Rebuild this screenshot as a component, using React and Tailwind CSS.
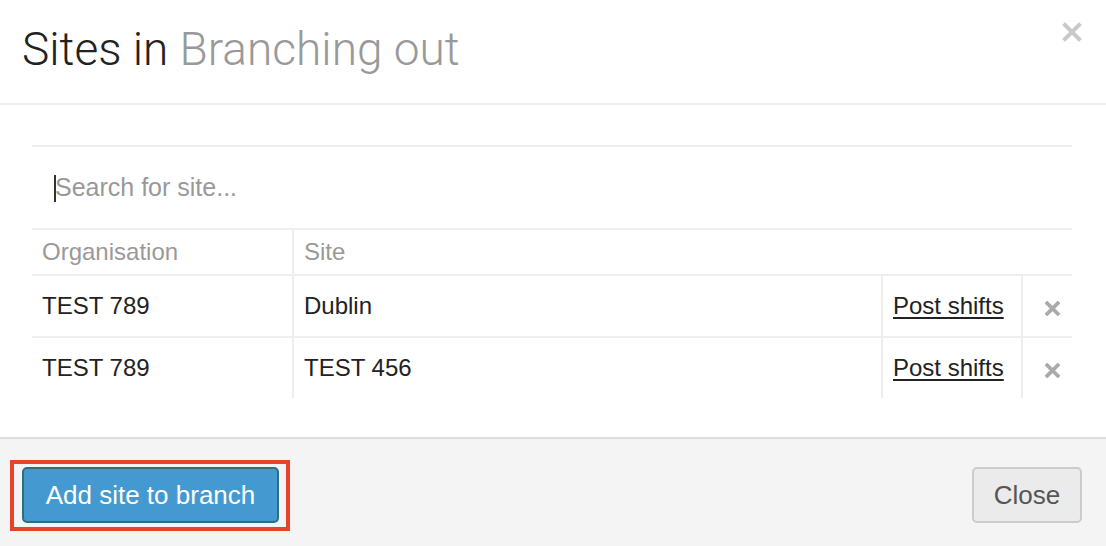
import React from "react";

const rows = [
  { org: "TEST 789", site: "Dublin" },
  { org: "TEST 789", site: "TEST 456" },
];

function Cross({ size, stroke, color }) {
  return (
    <svg width={size} height={size} viewBox="0 0 20 20">
      <path d="M3 3 L17 17 M17 3 L3 17" stroke={color} strokeWidth={stroke} strokeLinecap="square" />
    </svg>
  );
}

export default function App() {
  return (
    <div className="w-[1106px] h-[546px] bg-white flex flex-col overflow-hidden" style={{ fontFamily: '"Liberation Sans", Arial, sans-serif' }}>
      <div className="h-[105px] shrink-0 border-b-2 border-[#eeeeee] flex items-start justify-between pl-[22px] pr-[24px]">
        <h1 className="mt-[21px] text-[46px] leading-[56px] font-light text-[#222]" style={{ fontFamily: "Roboto, sans-serif" }}>
          Sites in <span className="text-[#999]">Branching out</span>
        </h1>
        <button className="mt-[22px]">
          <Cross size={20} stroke={4} color="#c9c9c9" />
        </button>
      </div>

      <div className="pl-[32px] pr-[34px] pt-[40px] pb-[39px]">
        <div className="relative border-t-2 border-[#eeeeee] h-[83px] flex items-center pl-[23px]">
          <span className="absolute left-[22px] top-[28px] w-[2px] h-[27px] bg-[#333]"></span>
          <input
            className="w-full outline-none text-[25px] text-[#222] placeholder:text-[#999] bg-transparent"
            placeholder="Search for site..."
          />
        </div>

        <div className="grid grid-cols-[260px_1fr] border-t-2 border-[#eeeeee] h-[46px] text-[24px] text-[#999]">
          <div className="pl-[10px] flex items-center">Organisation</div>
          <div className="pl-[10px] flex items-center border-l-2 border-[#eeeeee]">Site</div>
        </div>

        {rows.map((r, i) => (
          <div key={i} className="grid grid-cols-[260px_589px_140px_51px] border-t-2 border-[#eeeeee] h-[62px] text-[24px] text-[#222]">
            <div className="pl-[10px] flex items-center">{r.org}</div>
            <div className="pl-[10px] flex items-center border-l-2 border-[#eeeeee]">{r.site}</div>
            <div className="pl-[10px] flex items-center border-l-2 border-[#eeeeee]">
              <a href="#" className="underline underline-offset-[3px] decoration-2">Post shifts</a>
            </div>
            <div className="flex items-center pl-[22px] border-l-2 border-[#eeeeee] pt-[4px]">
              <Cross size={15} stroke={5} color="#aaaaaa" />
            </div>
          </div>
        ))}
      </div>

      <div className="flex-1 border-t-2 border-[#dddddd] bg-[#f4f4f4] flex items-start justify-between pl-[10px] pr-[24px] pt-[21px]">
        <div className="border-4 border-[#e8412c] pl-[8px] pr-[7px] pt-[3px] pb-[4px]">
          <button className="h-[56px] w-[257px] rounded-[5px] bg-[#4599d1] border-2 border-[#2f6f7d] text-white text-[26px]">
            Add site to branch
          </button>
        </div>
        <button className="mt-[7px] h-[56px] w-[110px] rounded-[5px] bg-[#ebebeb] border-2 border-[#cccccc] text-[#555] text-[26px]">
          Close
        </button>
      </div>
    </div>
  );
}
